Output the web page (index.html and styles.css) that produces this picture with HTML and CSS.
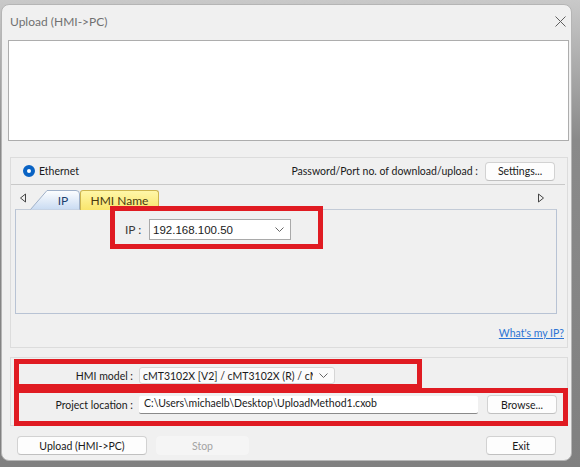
FILE: index.html
```html
<html>
    <head>
        <title>Upload (HMI->PC)</title>
        <link rel="stylesheet" href="styles.css">
    </head>
    <body>
        <div class="window">
            <div class="titlebar">
                <span class="title">Upload (HMI-&gt;PC)</span>
                <svg class="close" width="11" height="11" viewBox="0 0 11 11"><path d="M0.5 0.5 L10.5 10.5 M10.5 0.5 L0.5 10.5" stroke="#606060" stroke-width="1"/></svg>
            </div>

            <div class="log"></div>

            <div class="group conn">
                <div class="conn-row">
                    <label class="radio"><span class="dot"></span>Ethernet</label>
                    <div class="spacer"></div>
                    <span class="hint">Password/Port no. of download/upload :</span>
                    <button class="btn settings">Settings...</button>
                </div>
                <div class="tabs">
                    <svg class="arrow" width="8" height="10" viewBox="0 0 8 10"><path d="M6.5 1 L1.5 5 L6.5 9 Z" fill="none" stroke="#444" stroke-width="1"/></svg>
                    <div class="tab tab-ip">
                        <svg class="tab-shape" width="50" height="20" viewBox="0 0 50 20">
                            <defs>
                                <linearGradient id="ipg" x1="0" y1="0" x2="0" y2="1">
                                    <stop offset="0" stop-color="#fdfeff"/>
                                    <stop offset="1" stop-color="#c9dbf2"/>
                                </linearGradient>
                            </defs>
                            <path d="M0.5 19.5 L17 0.5 L46 0.5 Q49.5 0.5 49.5 4 L49.5 19.5" fill="url(#ipg)" stroke="#9fb0c8" stroke-width="1"/>
                        </svg>
                        <span class="tab-label">IP</span>
                    </div>
                    <div class="tab tab-name">HMI Name</div>
                    <div class="spacer"></div>
                    <svg class="arrow right" width="8" height="10" viewBox="0 0 8 10"><path d="M1.5 1 L6.5 5 L1.5 9 Z" fill="none" stroke="#444" stroke-width="1"/></svg>
                </div>
                <div class="panel">
                    <div class="ip-row">
                        <span class="ip-label">IP :</span>
                        <div class="ip-combo">
                            <span>192.168.100.50</span>
                            <svg width="9" height="5" viewBox="0 0 9 5"><path d="M0.5 0.5 L4.5 4.5 L8.5 0.5" fill="none" stroke="#666" stroke-width="1"/></svg>
                        </div>
                    </div>
                </div>
                <div class="link-row">
                    <a href="#" class="link">What's my IP?</a>
                </div>
            </div>

            <div class="group project">
                <div class="field-row">
                    <span class="field-label">HMI model :</span>
                    <div class="combo">
                        <span class="combo-text">cMT3102X [V2] / cMT3102X (R) / cMT</span>
                        <svg width="9" height="5" viewBox="0 0 9 5"><path d="M0.5 0.5 L4.5 4.5 L8.5 0.5" fill="none" stroke="#666" stroke-width="1"/></svg>
                    </div>
                </div>
                <div class="field-row">
                    <span class="field-label">Project location :</span>
                    <div class="path">C:\Users\michaelb\Desktop\UploadMethod1.cxob</div>
                    <button class="btn browse">Browse...</button>
                </div>
            </div>

            <div class="actions">
                <button class="btn upload">Upload (HMI-&gt;PC)</button>
                <button class="btn stop" disabled>Stop</button>
                <div class="spacer"></div>
                <button class="btn exit">Exit</button>
            </div>

            <!-- red annotation boxes drawn over the dialog -->
            <div class="mark mark-ip"></div>
            <div class="mark mark-model"></div>
            <div class="mark mark-path"></div>
        </div>
    </body>
</html>
```

FILE: styles.css
```css
* {
    box-sizing: border-box;
}
body {
    margin: 0;
    padding: 4px 0 0 1px;
    background: linear-gradient(#c9c9c9, #8a8a8a 30%, #808080);
    height: 467px;
    overflow: hidden;
    font-family: Lato, 'Open Sans', Arial, sans-serif;
    font-size: 10.5px;
    color: #1a1a1a;
}
.window {
    position: relative;
    width: 571px;
    height: 457px;
    background-color: #f0f0f0;
    border: 1px solid #b5b5b5;
    border-radius: 8px;
    display: flex;
    flex-direction: column;
    overflow: hidden;
}
.spacer {
    flex: 1;
}
.titlebar {
    height: 35px;
    display: flex;
    align-items: center;
    padding: 0 5px 2px 8px;
}
.title {
    flex: 1;
    font-size: 12px;
    color: #707070;
}
.log {
    height: 101px;
    margin: 0 2px 0 6px;
    background-color: #fff;
    border: 1px solid #adadad;
}
.group {
    border: 1px solid #dcdcdc;
    margin: 0 3px 0 8px;
}
.conn {
    margin-top: 16px;
    height: 191px;
    display: flex;
    flex-direction: column;
}
.conn-row {
    height: 27px;
    display: flex;
    align-items: center;
    padding: 0 10px 0 12px;
    border-bottom: 1px solid #c9c9c9;
    margin: 0 2px 0 0;
}
.radio {
    display: flex;
    align-items: center;
    gap: 4px;
}
.dot {
    width: 12px;
    height: 12px;
    border-radius: 50%;
    border: 4px solid #0a63c4;
    background-color: #fff;
}
.hint {
    margin-right: 7px;
}
.btn {
    font-family: Lato, 'Open Sans', Arial, sans-serif;
    font-size: 10.5px;
    color: #1a1a1a;
    background-color: #fdfdfd;
    border: 1px solid #d2d2d2;
    border-bottom-color: #c0c0c0;
    border-radius: 4px;
    height: 19px;
    padding: 0;
}
.settings, .browse, .exit {
    width: 70px;
}
.tabs {
    height: 24px;
    display: flex;
    align-items: flex-end;
    padding: 0 19px 0 8px;
}
.arrow {
    margin-bottom: 6px;
    margin-right: 3px;
}
.tab {
    height: 20px;
    position: relative;
    display: flex;
    align-items: center;
    justify-content: center;
    font-size: 12px;
    margin-bottom: -1px;
}
.tab-ip {
    width: 50px;
    padding-left: 16px;
}
.tab-shape {
    position: absolute;
    left: 0;
    top: 0;
}
.tab-label {
    position: relative;
    color: #1c3f6e;
}
.tab-name {
    width: 79px;
    background: linear-gradient(#fff7a8, #f9e56c);
    border: 1px solid #cdb650;
    border-bottom: none;
    border-radius: 3px 3px 0 0;
    color: #4a3a10;
}
.panel {
    height: 105px;
    margin: 0 10px 0 4px;
    border: 1px solid #b8c3d4;
    border-top-color: #c3cbd7;
    padding: 9px 0 0 109px;
}
.ip-row {
    display: flex;
    align-items: center;
}
.ip-label {
    font-size: 12px;
    color: #3a3a3a;
    width: 24px;
}
.ip-combo {
    width: 142px;
    height: 21px;
    background-color: #fff;
    border: 1px solid #a9a9a9;
    display: flex;
    align-items: center;
    justify-content: space-between;
    padding: 0 6px 0 3px;
    font-family: 'Liberation Sans', Arial, sans-serif;
    font-size: 11.5px;
}
.link-row {
    flex: 1;
    display: flex;
    justify-content: flex-end;
    align-items: center;
    padding: 4px 3px 0 0;
}
.link {
    color: #2b74d4;
    text-decoration: underline;
    white-space: nowrap;
}
.project {
    margin-top: 9px;
    height: 69px;
    padding: 9px 10px 0 2px;
    display: flex;
    flex-direction: column;
    gap: 12px;
}
.field-row {
    display: flex;
    align-items: center;
    height: 17px;
}
.field-label {
    width: 120px;
    text-align: right;
    margin-right: 6px;
}
.combo {
    width: 196px;
    height: 17px;
    background-color: #fbfbfb;
    border: 1px solid #d6d6d6;
    border-radius: 3px;
    display: flex;
    align-items: center;
    padding: 0 6px 0 3px;
    gap: 6px;
}
.combo-text {
    flex: 1;
    overflow: hidden;
    white-space: nowrap;
}
.path {
    width: 339px;
    height: 18px;
    background-color: #fff;
    border-bottom: 1px solid #8a8a8a;
    border-radius: 2px;
    padding: 1px 4px 0 5px;
    white-space: nowrap;
    margin-right: 9px;
}
.actions {
    display: flex;
    padding: 10px 15px 0 15px;
}
.upload {
    width: 130px;
}
.stop {
    width: 93px;
    margin-left: 9px;
    background-color: #f5f5f5;
    border-color: #f5f5f5;
    color: #a3a3a3;
}
.mark {
    position: absolute;
    border: 5px solid #e01b22;
}
.mark-ip {
    left: 108px;
    top: 201px;
    width: 213px;
    height: 43px;
}
.mark-model {
    left: 12px;
    top: 354px;
    width: 408px;
    height: 30px;
}
.mark-path {
    left: 12px;
    top: 383px;
    width: 554px;
    height: 38px;
}
```
